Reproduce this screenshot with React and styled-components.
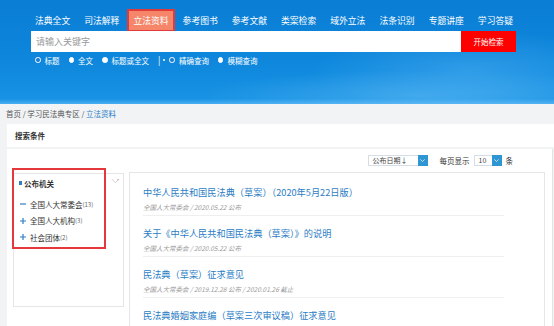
import React from "react";
import styled, { createGlobalStyle } from "styled-components";

const GlobalStyle = createGlobalStyle`
  html, body {
    margin: 0;
    padding: 0;
    background: #f2f3f5;
    font-family: "Noto Sans CJK SC", "Noto Sans", sans-serif;
    overflow: hidden;
  }
`;

const navItems = ["法典全文", "司法解释", "立法资料", "参考图书", "参考文献", "类案检索", "域外立法", "法条识别", "专题讲座", "学习答疑"];

const radios = [
  { label: "标题", hollow: true },
  { label: "全文" },
  { label: "标题或全文" },
  { sep: true },
  { label: "精确查询", hollow: true },
  { label: "模糊查询" },
];

const sideItems = [
  { open: true, name: "全国人大常委会", count: 13 },
  { name: "全国人大机构", count: 3 },
  { name: "社会团体", count: 2 },
];

const docs = [
  { title: "中华人民共和国民法典（草案）（2020年5月22日版）", meta: "全国人大常委会 / 2020.05.22 公布" },
  { title: "关于《中华人民共和国民法典（草案）》的说明", meta: "全国人大常委会 / 2020.05.22 公布" },
  { title: "民法典（草案）征求意见", meta: "全国人大常委会 / 2019.12.28 公布 / 2020.01.26 截止" },
  { title: "民法典婚姻家庭编（草案三次审议稿）征求意见", meta: "全国人大常委会 / 2019.10.31 公布" },
];

const App = () => {
  return (
    <>
      <GlobalStyle />
      <Page>
        <Banner>
          <BannerInner>
            <Nav>
              {navItems.map((n) => (
                <NavItem key={n} $active={n === "立法资料"}>{n}</NavItem>
              ))}
            </Nav>
            <SearchRow>
              <SearchInput placeholder="请输入关键字" />
              <SearchBtn>开始检索</SearchBtn>
            </SearchRow>
            <Options>
              {radios.map((r, i) =>
                r.sep ? (
                  <Sep key={i}>|<SepDot /></Sep>
                ) : (
                  <Radio key={i}>
                    <RadioDot $hollow={r.hollow} />
                    {r.label}
                  </Radio>
                )
              )}
            </Options>
          </BannerInner>
        </Banner>

        <Crumbs>
          首页 / 学习民法典专区 / <CrumbCurrent>立法资料</CrumbCurrent>
        </Crumbs>

        <CondCard>搜索条件</CondCard>

        <MainPanel>
          <Toolbar>
            <Select $w={60}>
              公布日期↓
              <SelectArrow>
                <Chevron />
              </SelectArrow>
            </Select>
            <ToolLabel>每页显示</ToolLabel>
            <Select $w={28}>
              10
              <SelectArrow>
                <Chevron />
              </SelectArrow>
            </Select>
            <ToolLabel>条</ToolLabel>
          </Toolbar>

          <Body>
            <Sidebar>
              <Highlight />
              <CollapseIcon viewBox="0 0 10 6">
                <path d="M0.8 0.8 L5 5 L9.2 0.8" fill="none" stroke="#c8c8c8" strokeWidth="0.9" />
                <circle cx="7.6" cy="1.6" r="0.8" fill="#e79a9a" />
              </CollapseIcon>
              <FacetTitle>
                <FacetMark />
                公布机关
              </FacetTitle>
              {sideItems.map((s) => (
                <FacetItem key={s.name}>
                  <FacetSign>
                    <svg width="6" height="6" viewBox="0 0 6 6">
                      <path d={s.open ? "M0 3 H6" : "M0 3 H6 M3 0 V6"} stroke="#2d7fc6" strokeWidth="1.2" />
                    </svg>
                  </FacetSign>
                  {s.name}
                  <FacetCount>({s.count})</FacetCount>
                </FacetItem>
              ))}
            </Sidebar>

            <ResultBox>
              {docs.map((d) => (
                <DocItem key={d.title}>
                  <DocTitle>{d.title}</DocTitle>
                  <DocMeta>{d.meta}</DocMeta>
                </DocItem>
              ))}
            </ResultBox>
          </Body>
        </MainPanel>
      </Page>
    </>
  );
};

const Page = styled.div`
  width: 554px;
  height: 326px;
  overflow: hidden;
`;

const Banner = styled.div`
  height: 104px;
  background:
    radial-gradient(ellipse 160px 40px at 470px 70px, rgba(120, 200, 255, 0.3), transparent),
    radial-gradient(ellipse 220px 26px at 420px 96px, rgba(150, 215, 255, 0.3), transparent),
    linear-gradient(180deg, #0a7dd4 0%, #0d86db 55%, #1792e4 95%, #4aadf2 100%);
`;

const BannerInner = styled.div`
  padding: 10px 0 0 31px;
  width: 485px;
`;

const Nav = styled.div`
  display: flex;
  align-items: center;
  height: 21px;
  padding-left: 4px;
`;

const NavItem = styled.div`
  flex: none;
  white-space: nowrap;
  font-size: 8.8px;
  line-height: 19px;
  color: #fff;
  margin-right: 14px;
  ${(p) => p.$active && `
    background: #f5866a;
    padding: 0 4px;
    margin-left: -4px;
    margin-right: 10px;
    outline: 2px solid #e23a3a;
  `}
`;

const SearchRow = styled.div`
  display: flex;
  height: 21px;
`;

const SearchInput = styled.input`
  width: 430px;
  height: 21px;
  box-sizing: border-box;
  border: none;
  margin: 0;
  padding: 0 5px;
  font-family: inherit;
  font-size: 9px;
  background: #fff;
  outline: none;
  &::placeholder {
    color: #9a9a9a;
  }
`;

const SearchBtn = styled.button`
  width: 55px;
  height: 21px;
  border: none;
  margin: 0;
  padding: 0;
  background: #ff0000;
  color: #fff;
  font-family: inherit;
  font-size: 7.5px;
`;

const Options = styled.div`
  display: flex;
  align-items: center;
  height: 14px;
  padding-left: 4px;
  margin-top: 1px;
  gap: 9px;
`;

const Radio = styled.span`
  display: flex;
  align-items: center;
  gap: 4px;
  font-size: 7.5px;
  color: #fff;
  white-space: nowrap;
`;

const RadioDot = styled.span`
  width: 5.5px;
  height: 5.5px;
  border-radius: 50%;
  box-sizing: border-box;
  border: 1.2px solid #fff;
  background: ${(p) => (p.$hollow ? "#1c7fd8" : "#fff")};
`;

const Sep = styled.span`
  display: flex;
  align-items: center;
  gap: 3px;
  color: #fff;
  font-size: 9px;
  margin: 0 -5px 0 0;
`;

const SepDot = styled.span`
  width: 2px;
  height: 2px;
  border-radius: 50%;
  background: #fff;
`;

const Crumbs = styled.div`
  height: 20px;
  line-height: 20px;
  padding-left: 6px;
  font-size: 7.5px;
  color: #555;
`;

const CrumbCurrent = styled.span`
  color: #2b7dc5;
`;

const CondCard = styled.div`
  margin-left: 7px;
  height: 23px;
  line-height: 23px;
  padding-left: 8px;
  background: #fff;
  font-size: 7.5px;
  font-weight: bold;
  color: #333;
`;

const MainPanel = styled.div`
  margin: 2px 1px 0 7px;
  height: 200px;
  background: #fff;
  border-right: 1px solid #e3e3e3;
`;

const Toolbar = styled.div`
  display: flex;
  align-items: center;
  justify-content: flex-end;
  height: 23px;
  padding-right: 39px;
  gap: 4px;
`;

const Select = styled.div`
  position: relative;
  width: ${(p) => p.$w}px;
  height: 11px;
  box-sizing: border-box;
  border: 1px solid #d7dde4;
  font-size: 7px;
  line-height: 9px;
  padding-left: 4px;
  color: #444;
  margin-right: ${(p) => (p.$w > 40 ? "8px" : "0")};
`;

const SelectArrow = styled.span`
  position: absolute;
  right: -1px;
  top: -1px;
  width: 10px;
  height: 11px;
  background: #2d96d3;
  display: flex;
  align-items: center;
  justify-content: center;
`;

const Chevron = () => (
  <svg width="5" height="3" viewBox="0 0 5 3">
    <path d="M0.4 0.4 L2.5 2.5 L4.6 0.4" fill="none" stroke="#fff" strokeWidth="0.7" />
  </svg>
);

const ToolLabel = styled.span`
  font-size: 7.5px;
  color: #333;
`;

const Body = styled.div`
  display: flex;
  align-items: flex-start;
  padding: 0 7px 0 6px;
  gap: 5px;
`;

const Sidebar = styled.div`
  position: relative;
  flex: 0 0 111px;
  height: 134px;
  margin-top: 1px;
  box-sizing: border-box;
  border: 1px solid #e6e6e6;
  padding: 3px 0 0 5px;
`;

const Highlight = styled.div`
  position: absolute;
  left: -2px;
  top: -6px;
  width: 94px;
  height: 81px;
  box-sizing: border-box;
  border: 2px solid #e4383c;
`;

const CollapseIcon = styled.svg`
  position: absolute;
  right: 3px;
  top: 4px;
  width: 9px;
  height: 6px;
`;

const FacetTitle = styled.div`
  display: flex;
  align-items: center;
  gap: 2px;
  font-size: 7.5px;
  font-weight: bold;
  color: #333;
  height: 12px;
  margin-bottom: 9px;
`;

const FacetMark = styled.span`
  width: 3px;
  height: 4px;
  background: #2d7fc6;
`;

const FacetItem = styled.div`
  display: flex;
  align-items: center;
  font-size: 7.5px;
  color: #333;
  height: 12px;
  margin-bottom: 4.5px;
`;

const FacetSign = styled.span`
  display: flex;
  width: 10px;
  padding-left: 1px;
`;

const FacetCount = styled.span`
  font-size: 6px;
  color: #666;
`;

const ResultBox = styled.div`
  flex: 1;
  height: 200px;
  box-sizing: border-box;
  border: 1px solid #e6e6e6;
  padding: 2px 40px 0 13px;
`;

const DocItem = styled.div`
  padding: 11px 0 3px;
  border-bottom: 1px solid #efefef;
`;

const DocTitle = styled.div`
  font-size: 9.2px;
  line-height: 12px;
  color: #2b7dc5;
  white-space: nowrap;
`;

const DocMeta = styled.div`
  margin-top: 4px;
  font-size: 6.5px;
  line-height: 10px;
  font-style: italic;
  color: #9a9a9a;
  white-space: nowrap;
`;

export default App;
